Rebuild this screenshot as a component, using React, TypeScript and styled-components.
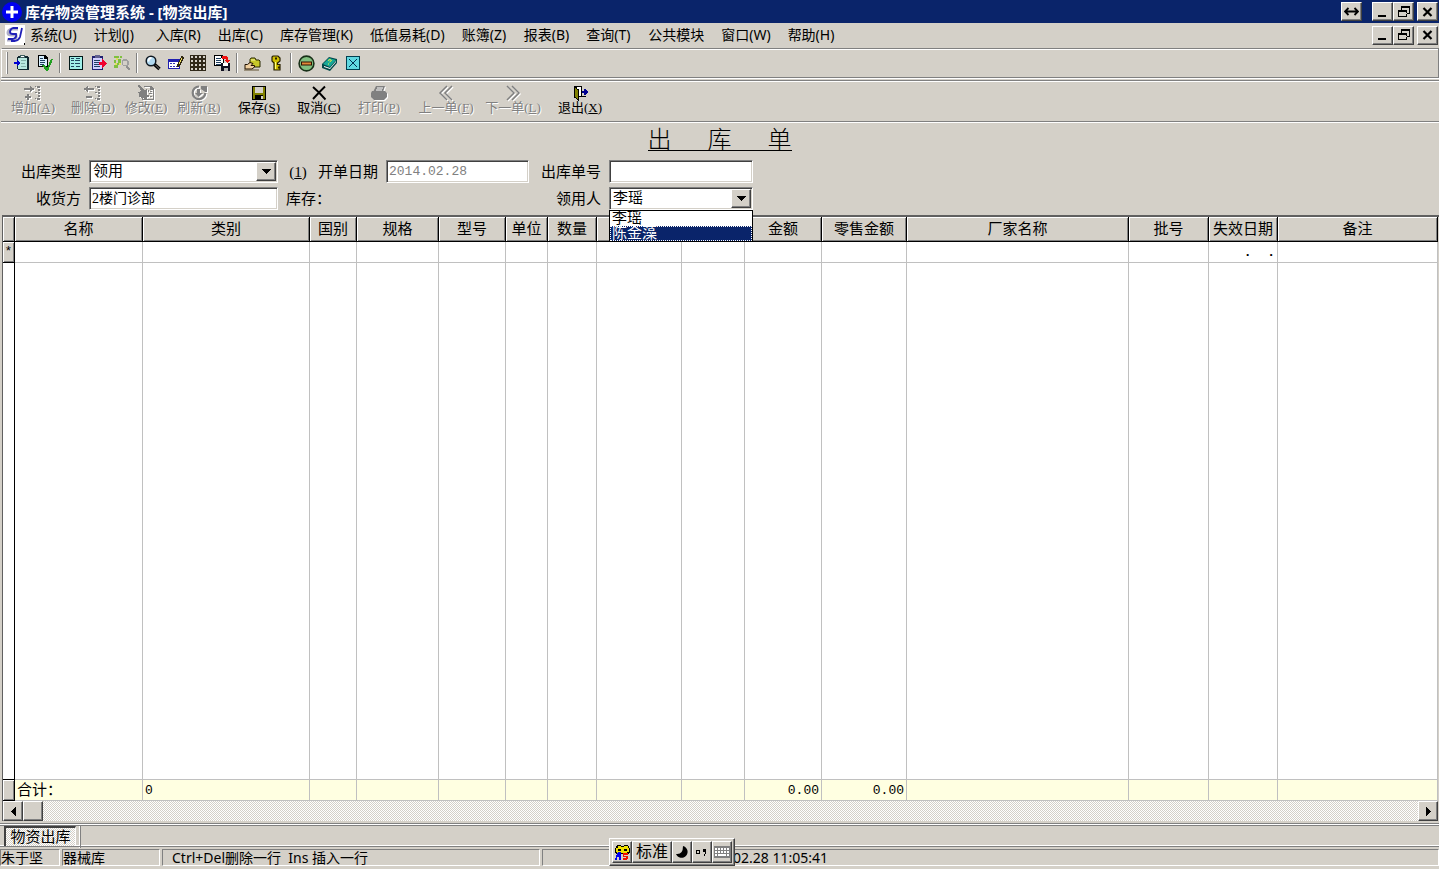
import React from 'react';
import styled, { createGlobalStyle, css } from 'styled-components';

const face = '#d4d0c8';
const shade = '#808080';
const ink = '#000000';
const navy = '#0a246a';
const uiFont = `"Noto Sans", "Noto Sans CJK SC", sans-serif`;
const songFont = `"Liberation Serif", "Noto Sans CJK SC", serif`;
const monoFont = `"Liberation Mono", "Noto Sans CJK SC", monospace`;
const dither = `repeating-conic-gradient(#ffffff 0% 25%, ${face} 0% 50%) 0 0 / 2px 2px`;

const GlobalStyle = createGlobalStyle`
  * { box-sizing: border-box; }
  body { margin: 0; background: ${face}; color: ${ink}; font: 14px/20px ${uiFont}; }
  button, input, select { font: inherit; color: inherit; margin: 0; padding: 0; border-radius: 0; }
`;

const raised = css`
  border: 1px solid;
  border-color: #ffffff #404040 #404040 #ffffff;
  box-shadow: inset -1px -1px 0 ${shade};
  background: ${face};
`;

const sunken = css`
  border: 1px solid;
  border-color: ${shade} #ffffff #ffffff ${shade};
  box-shadow: inset 1px 1px 0 #404040, inset -1px -1px 0 ${face};
  background: #ffffff;
`;

const Page = styled.div`
  display: flex;
  flex-direction: column;
  min-height: 100vh;
  overflow: hidden;
`;

const TitleBar = styled.header`
  display: flex;
  align-items: center;
  height: 23px;
  padding: 0 1px 0 2px;
  gap: 3px;
  background: ${navy};
  color: #ffffff;
`;

const Caption = styled.span`
  flex: 1;
  font-size: 15px;
  font-weight: 700;
  white-space: nowrap;
`;

const FrameButtons = styled.div`
  display: flex;
`;

const FrameButton = styled.button<{ $gap?: number }>`
  ${raised}
  display: grid;
  place-items: center;
  width: 21px;
  height: 19px;
  margin-left: ${(p) => p.$gap ?? 0}px;
  color: ${ink};
`;

const MenuBar = styled.nav`
  display: flex;
  align-items: center;
  height: 25px;
  padding: 0 1px 1px 5px;
`;

const MenuList = styled.div`
  display: flex;
  flex: 1;
  gap: 17px;
  margin-left: 5px;
`;

const MenuItem = styled.button`
  min-width: 45px;
  border: 0;
  background: none;
  text-align: left;
  white-space: nowrap;
`;

const IconBar = styled.div`
  display: flex;
  align-items: center;
  height: 30px;
  margin-left: 1px;
  padding-left: 4px;
  border: 1px solid ${shade};
  border-left-color: #ffffff;
  box-shadow: inset 0 1px 0 #ffffff, 0 1px 0 #ffffff;
`;

const Grip = styled.span`
  width: 2px;
  height: 22px;
  margin-right: 2px;
  border-left: 1px solid #ffffff;
  border-right: 1px solid ${shade};
`;

const Divider = styled.span`
  width: 2px;
  height: 20px;
  margin: 0 3px;
  border-left: 1px solid ${shade};
  border-right: 1px solid #ffffff;
`;

const IconButton = styled.button`
  display: grid;
  place-items: center;
  width: 23px;
  height: 24px;
  border: 0;
  background: none;
`;

const ActionBar = styled.div`
  display: flex;
  height: 42px;
  margin: 2px 0 0 1px;
  padding: 4px 0 0 2px;
  border-top: 1px solid ${shade};
  border-bottom: 1px solid ${shade};
  box-shadow: inset 0 1px 0 #ffffff, 0 1px 0 #ffffff;
`;

const ActionButton = styled.button<{ $width: number }>`
  display: flex;
  flex-direction: column;
  align-items: center;
  width: ${(p) => p.$width}px;
  border: 0;
  background: none;
  font: 13px/14px ${songFont};
  white-space: nowrap;

  &:disabled {
    color: ${shade};
    text-shadow: 1px 1px 0 #ffffff;
  }

  &:disabled svg {
    filter: drop-shadow(1px 1px 0 #ffffff);
  }
`;

const FormArea = styled.form`
  padding: 2px 0 4px;
  font: 15px/20px ${songFont};
`;

const FormTitle = styled.h1`
  width: fit-content;
  height: 27px;
  margin: 0 auto 9px;
  border-bottom: 1px solid ${ink};
  font: 300 24px/32px ${songFont};
  white-space: pre;
`;

const Fields = styled.div`
  display: grid;
  grid-template-columns: 81px 189px 92px 143px 64px 144px;
  grid-auto-rows: 24px;
  gap: 3px 8px;
`;

const FieldLabel = styled.label<{ $left?: boolean }>`
  align-self: center;
  text-align: ${(p) => (p.$left ? 'left' : 'right')};
  white-space: pre;
`;

const TextField = styled.input`
  ${sunken}
  width: 100%;
  height: 23px;
  padding: 0 2px 3px;
  font: 14px/18px ${songFont};

  &:disabled {
    padding: 0 2px;
    color: ${shade};
    font: 13px/18px ${monoFont};
  }
`;

const Combo = styled.div`
  position: relative;
`;

const ComboSelect = styled.select`
  ${sunken}
  appearance: none;
  width: 100%;
  height: 23px;
  padding: 0 22px 0 3px;
  font: 15px/19px ${songFont};
`;

const ComboArrow = styled.span`
  ${raised}
  position: absolute;
  top: 2px;
  right: 2px;
  display: grid;
  place-items: center;
  width: 20px;
  height: 19px;
  pointer-events: none;
`;

const ComboList = styled.ul`
  position: absolute;
  z-index: 2;
  top: 23px;
  left: 0;
  right: 0;
  margin: 0;
  padding: 0;
  border: 1px solid ${ink};
  background: #ffffff;
  list-style: none;
`;

const ComboOption = styled.li<{ $active?: boolean }>`
  height: 15px;
  padding-left: 2px;
  font: 15px/15px ${songFont};
  ${(p) =>
    p.$active &&
    css`
      background: ${navy};
      color: #ffffff;
      outline: 1px dotted #ffffff;
      outline-offset: -1px;
    `}
`;

const GridFrame = styled.main`
  flex: 1;
  display: grid;
  grid-template-rows: 1fr 20px;
  margin-left: 2px;
  padding-right: 1px;
  border-top: 2px solid #606060;
  border-left: 1px solid #606060;
`;

const DataTable = styled.table`
  width: 100%;
  table-layout: fixed;
  border-collapse: separate;
  border-spacing: 0;
  background: #ffffff;
  font: 15px/18px ${songFont};
`;

const HeadCell = styled.th`
  height: 25px;
  padding: 0;
  border-right: 1px solid ${ink};
  border-bottom: 1px solid ${ink};
  background: ${face};
  box-shadow: inset 1px 1px 0 #ffffff, inset -1px -1px 0 ${shade};
  font-weight: 400;
  white-space: nowrap;
`;

const MarkCell = styled.th<{ $plain?: boolean }>`
  padding: 0;
  border-right: 1px solid ${ink};
  border-bottom: 1px solid ${ink};
  background: ${(p) => (p.$plain ? '#ffffff' : face)};
  box-shadow: ${(p) => (p.$plain ? 'none' : `inset 1px 1px 0 #ffffff, inset -1px -1px 0 ${shade}`)};
  font: 13px/18px ${monoFont};
`;

const Cell = styled.td<{ $total?: boolean; $right?: boolean }>`
  padding: 0 2px;
  border-right: 1px solid #c0c0c0;
  border-bottom: 1px solid #c0c0c0;
  background: ${(p) => (p.$total ? '#ffffe1' : '#ffffff')};
  text-align: ${(p) => (p.$right ? 'right' : 'left')};
  white-space: pre;
`;

const Row = styled.tr<{ $fixed?: boolean }>`
  height: ${(p) => (p.$fixed ? '20px' : 'auto')};
`;

const Figure = styled.span<{ $strong?: boolean }>`
  font: ${(p) => (p.$strong ? 700 : 400)} 13px/18px ${monoFont};
`;

const ScrollBar = styled.div`
  display: flex;
  background: ${dither};
`;

const ScrollButton = styled.button`
  ${raised}
  display: grid;
  place-items: center;
  width: 20px;
  height: 20px;
`;

const ScrollSpace = styled.span`
  flex: 1;
`;

const TabBar = styled.div`
  display: flex;
  gap: 3px;
  height: 23px;
  margin-top: 2px;
  padding: 2px 0 0 4px;
  border-top: 1px solid ${shade};
  border-bottom: 1px solid #ffffff;
  box-shadow: inset 0 1px 0 #ffffff, inset 0 2px 0 ${shade};
`;

const WindowTab = styled.button`
  width: 72px;
  height: 20px;
  border: solid;
  border-width: 2px 1px 0 2px;
  border-color: #404040 #ffffff #ffffff #404040;
  background: ${dither};
  font: 15px/18px ${songFont};
  white-space: nowrap;
`;

const StatusBar = styled.footer`
  display: grid;
  grid-template-columns: 60px 98px 378px 1fr;
  gap: 2px;
  padding: 2px 0 3px;
  border-top: 1px solid ${shade};
`;

const StatusPanel = styled.div<{ $indent?: number }>`
  height: 17px;
  padding-left: ${(p) => p.$indent ?? 0}px;
  border: 1px solid;
  border-color: ${shade} #ffffff #ffffff ${shade};
  line-height: 16px;
  white-space: pre;
`;

const ImeBar = styled.div`
  ${raised}
  position: fixed;
  z-index: 3;
  left: 609px;
  bottom: 3px;
  display: flex;
  height: 28px;
  padding: 2px;
`;

const ImeButton = styled.button<{ $width: number }>`
  ${raised}
  display: grid;
  place-items: center;
  width: ${(p) => p.$width}px;
  height: 22px;
  font: 16px/18px ${songFont};
`;

const Mnemonic = ({ letter }: { letter: string }) => (
  <span>(<u>{letter}</u>)</span>
);

type IconProps = { children: React.ReactNode; w?: number; h?: number };
const Pixels = ({ children, w = 16, h = 16 }: IconProps) => (
  <svg width={w} height={h} viewBox={`0 0 ${w} ${h}`} shapeRendering="crispEdges" fill="none" aria-hidden="true">
    {children}
  </svg>
);

const Down = () => (
  <Pixels w={9} h={5}><path d="M0 0h9v1h-1v1h-1v1h-1v1h-1v1h-1v-1h-1v-1h-1v-1h-1v-1h-1z" fill="#000" /></Pixels>
);
const Minimize = () => <Pixels w={13} h={12}><path d="M2 9h8v2h-8z" fill="#000" /></Pixels>;
const Restore = () => (
  <Pixels w={13} h={12}>
    <path d="M4 0h9v8h-4v-1h3v-5h-7v2h-1zM1 4h9v7h-9zM2 6v4h7v-4z" fill="#000" fillRule="evenodd" />
  </Pixels>
);
const Close = () => (
  <svg width="11" height="10" viewBox="0 0 11 10" aria-hidden="true"><path d="M1.500 1l8 8M9.500 1l-8 8" stroke="#000" strokeWidth="2.200" /></svg>
);
const Spread = () => (
  <svg width="15" height="9" viewBox="0 0 15 9" fill="none" aria-hidden="true">
    <path d="M1 4.500h13M4.500 1L1 4.500 4.500 8M10.500 1L14 4.500 10.500 8" stroke="#000" strokeWidth="1.800" />
  </svg>
);

const AppMark = () => (
  <svg width="20" height="20" viewBox="0 0 20 20" aria-hidden="true">
    <circle cx="10" cy="10" r="10" fill="#0000f0" />
    <path d="M8.500 4h3v4.500H16v3h-4.500V16h-3v-4.500H4v-3h4.500z" fill="#fff" />
  </svg>
);

const DocMark = () => (
  <svg width="20" height="20" viewBox="0 0 20 20" aria-hidden="true">
    <path d="M0 0h20v20H0z" fill="#fff" />
    <path d="M13 4H7Q3 5 3 8q0 2 4 2h4q1 4-3 5H2" fill="none" stroke="#b0b0c8" strokeWidth="3" />
    <path d="M13 3H8Q5 4 5 7q0 2 3 2h3q1 4-3 5H3M17 3l-2 9q-1 3-5 4H6" fill="none" stroke="#2020b8" strokeWidth="1.800" />
    <path d="M19 18h1v2h-1z" fill="#000" />
  </svg>
);

const Lines = ({ x, y, w = 6, n = 3 }: { x: number; y: number; w?: number; n?: number }) => (
  <>{Array.from({ length: n }, (_, i) => <path key={i} d={`M${x} ${y + i * 2}h${w}v1h-${w}z`} fill="#204060" />)}</>
);

const clipboardIn = (
  <Pixels>
    <path d="M4 1h10v1h1v13H4v-1H3V2h1z" fill="#102830" /><path d="M4 3h9v11H4z" fill="#b8e8e0" />
    <path d="M6 0h5v3H6z" fill="#406060" /><path d="M7 1h3v1H7z" fill="#fff" />
    <path d="M7 5h5v1H7zM7 8h4v1H7zM7 11h5v1H7z" fill="#80b0a8" />
    <path d="M0 7h3V5h1v1h1v1h1v2H5v1H4v1H3V9H0z" fill="#0000d0" />
  </Pixels>
);
const pageCheck = (
  <Pixels>
    <path d="M1 0h7l3 3v9H1z" fill="#000" /><path d="M2 1h5v3h3v7H2z" fill="#d8f0ff" />
    <path d="M3 3h3v1H3zM3 5h5v1H3zM3 7h5v1H3zM3 9h4v1H3z" fill="#204060" />
    <path d="M5 10h2l3 3 4-9h2l-5 12H9z" fill="#20a020" />
  </Pixels>
);
const listing = (
  <Pixels>
    <path d="M1 1h14v14H1z" fill="#001818" /><path d="M2 2h12v12H2z" fill="#a0f0e8" />
    <path d="M3 3h3v1H3zM8 3h4v1H8zM3 5h3v1H3zM7 5h5v1H7zM3 8h3v1H3zM7 8h5v1H7zM3 11h3v1H3zM8 11h4v1H8z" fill="#204860" />
  </Pixels>
);
const clipboardOut = (
  <Pixels>
    <path d="M1 1h11v14H1z" fill="#202070" /><path d="M2 3h9v11H2z" fill="#d0d0ff" />
    <path d="M4 0h5v3H4z" fill="#606090" /><Lines x={3} y={5} w={6} n={4} />
    <path d="M8 7h3V4h1v1h1v1h1v1h1v1h1v1h-1v1h-1v1h-1v1h-1v1h-1v-3H8z" fill="#f00030" />
  </Pixels>
);
const findFaded = (
  <Pixels>
    <path d="M0 1h5v2H0zM0 5h2v3H0zM4 4h3v4H4zM0 10h4v3H0zM6 1h2v2H6zM3 8h2v2H3z" fill="#80c040" />
    <path d="M2 3h2v2H2zM1 8h2v2H1zM5 8h2v2H5z" fill="#e0e060" />
    <path d="M9 4h4v1h1v1h1v4h-1v1H9v-1H8V5h1zM9 6v4h4V6z" fill="#a0a0a0" fillRule="evenodd" />
    <path d="M12 11h2v1h1v1h1v2h-2v-1h-1v-1h-1z" fill="#909090" />
  </Pixels>
);
const magnifier = (
  <svg width="16" height="16" viewBox="0 0 16 16" aria-hidden="true">
    <path d="M9 9l5.500 5" stroke="#000" strokeWidth="3.500" /><path d="M10.500 10l4 4" stroke="#808080" strokeWidth="1" />
    <circle cx="6" cy="6" r="4.800" fill="#b0d8f0" stroke="#101820" strokeWidth="1.500" />
    <path d="M3.500 6.500q0-3.500 3-3.500" stroke="#fff" strokeWidth="1.800" fill="none" />
  </svg>
);
const editTable = (
  <Pixels>
    <path d="M0 4h12v10H0z" fill="#2020b0" /><path d="M1 7h10v6H1z" fill="#fff" />
    <path d="M2 8h2v1H2zM5 8h2v1H5zM2 11h2v1H2zM5 11h2v1H5zM8 11h2v1H8z" fill="#3030b0" />
    <path d="M13 1h2v1h1v2h-1v2h-1v2h-1v2h-1v1h-1v1H9V9h1V7h1V5h1V3h1z" fill="#302810" />
    <path d="M13 3h1v2h-1v2h-1v2h-1V7h1V5h1z" fill="#f0e060" />
  </Pixels>
);
const gridDots = (
  <Pixels w={17} h={17}>
    {[0, 4, 8, 12].flatMap((y) => [0, 4, 8, 12].map((x) => (
      <path key={`${x}-${y}`} d={`M${x} ${y}h4v4h-4zM${x + 1} ${y + 1}v2h2v-2z`} fill="#302818" fillRule="evenodd" />
    )))}
  </Pixels>
);
const exportDisk = (
  <Pixels>
    <path d="M0 0h8l2 2v9H0z" fill="#000" /><path d="M1 1h6v2h2v7H1z" fill="#fff" /><Lines x={2} y={3} w={5} n={4} />
    <path d="M8 1h5v1h1v3h2l-3 3-3-3h2V4H8z" fill="#f01010" />
    <path d="M7 8h9v8H7z" fill="#101020" /><path d="M9 8h5v3H9z" fill="#fff" /><path d="M10 13h4v3h-4z" fill="#b0b0b0" />
  </Pixels>
);
const handBox = (
  <svg width="17" height="16" viewBox="0 0 17 16" aria-hidden="true">
    <path d="M6 6V4.500L7 3h4l1 2h3l1 1v6H8L6 9z" fill="#c8c828" stroke="#282800" strokeWidth="1" />
    <path d="M7 5h4" stroke="#f8f8a0" />
    <path d="M1 9.500h2.500L6 7.500l3 1-2 2h3.500v1.500L8 14H1z" fill="#f0d0a0" stroke="#201000" />
    <path d="M0 15h15" stroke="#605030" />
  </svg>
);
const keyIcon = (
  <svg width="16" height="16" viewBox="0 0 16 16" aria-hidden="true">
    <path d="M5 1h5l2 2v3L9.500 8v1.500H12V12h-1.500v1H12v2H6V8L4 6V2z" fill="#d0c000" stroke="#282000" strokeWidth="1.200" />
    <path d="M7 2.500h2v2H7z" fill="#282000" /><path d="M7.500 7v7" stroke="#ffff80" />
  </svg>
);
const stopSign = (
  <svg width="17" height="17" viewBox="0 0 17 17" aria-hidden="true">
    <circle cx="8.500" cy="8.500" r="7.400" fill="#80c080" stroke="#183018" strokeWidth="1.600" />
    <path d="M3 6.500h11v4H3z" fill="#301000" /><path d="M4 7.500h9v2H4z" fill="#e08838" />
  </svg>
);
const helpBook = (
  <svg width="17" height="17" viewBox="0 0 17 17" aria-hidden="true">
    <path d="M1 9l7-7 8 2v4l-7 8-8-3z" fill="#004848" /><path d="M2 9l6-6 7 2-6 7z" fill="#18a898" />
    <path d="M3 12l6 2 6-7v-1l-6 7-6-2z" fill="#fff" />
    <path d="M7 5.500l2-1 1.500 1-2 1.500M7.500 8.500v1" stroke="#f0f040" fill="none" />
  </svg>
);
const closeBox = (
  <Pixels>
    <path d="M1 1h14v14H1z" fill="#004050" /><path d="M2 2h12v12H2z" fill="#60d8e0" />
    <path d="M4 4h1v1h1v1h1v1h2V6h1V5h1V4h1v1h-1v1h-1v1H9v2h1v1h1v1h1v1h-1v-1h-1v-1H9V9H7v1H6v1H5v1H4v-1h1v-1h1V9h1V7H6V6H5V5H4z" fill="#003050" />
  </Pixels>
);

const rowDots = 'M13 1h3v2h-3zM11 1h1v1h-1zM14 4h2v2h-2zM14 7h2v2h-2zM11 7h2v1h-2zM14 10h2v2h-2zM13 13h3v2h-3zM11 13h1v1h-1z';
const insertRow = (
  <Pixels w={18}>
    <path d={`M0 3h6V1h1v1h1v1h2v2H8v1H7v1H6V5H0zM3 9h2v2h2v2H5v2H3v-2H1v-2h2z${rowDots}`} fill="#808080" />
  </Pixels>
);
const deleteRow = (
  <Pixels w={18}>
    <path d={`M10 3H4V1H3v1H2v1H0v2h2v1h1v1h1V5h6zM2 11h6v2H2z${rowDots}`} fill="#808080" />
  </Pixels>
);
const modify = (
  <Pixels>
    <path d="M6 1h7l3 3v11H4v-2h1v1h10V5h-3V2H6z" fill="#808080" />
    <path d="M0 0h2v1h1v1h1v1h1v1h1v1h2V4h1v6h2v2H9v2H6v-1H3v-1H1V8H0V7h2V6h1V5H2V3H1V2H0zM10 5h1v2h-1zM12 6h2v1h-2zM11 8h3v1h-3zM12 11h2v1h-2z" fill="#808080" />
  </Pixels>
);
const refresh = (
  <svg width="16" height="16" viewBox="0 0 16 16" fill="none" aria-hidden="true">
    <path d="M8 1.500A6.300 6.300 0 1 0 14.300 8" stroke="#808080" strokeWidth="2.200" />
    <path d="M10 1h6v6h-2L10 4zM6 4h3v4h3l-4.500 4L4 8h2z" fill="#808080" />
  </svg>
);
const save = (
  <Pixels>
    <path d="M1 1h14v14H1z" fill="#000" /><path d="M2 2h2v6h8V2h2v12H2z" fill="#808000" />
    <path d="M4 2h8v6H4z" fill="#d4d0c8" /><path d="M4 10h8v5H4z" fill="#000" /><path d="M10 11h2v3h-2z" fill="#d4d0c8" />
  </Pixels>
);
const cancel = (
  <svg width="16" height="16" viewBox="0 0 16 16" aria-hidden="true">
    <path d="M2 2l6 5.500 6.500 7M14 1.500L8 7.500l-6 6.500" fill="none" stroke="#000" strokeWidth="1.900" />
  </svg>
);
const printer = (
  <svg width="16" height="16" viewBox="0 0 16 16" aria-hidden="true">
    <path d="M5 1h9l-2 6H2zM1 6h13l2 2v4l-3 3H3l-3-3V8z" fill="#808080" /><path d="M6 3h6M5 5h6" stroke="#fff" />
  </svg>
);
const previous = (
  <svg width="16" height="16" viewBox="0 0 16 16" fill="none" aria-hidden="true">
    <path d="M9 1L2 8l7 7M14 1L7 8l7 7" stroke="#808080" strokeWidth="1.500" />
  </svg>
);
const next = (
  <svg width="16" height="16" viewBox="0 0 16 16" fill="none" aria-hidden="true">
    <path d="M2 1l7 7-7 7M7 1l7 7-7 7" stroke="#808080" strokeWidth="1.500" />
  </svg>
);
const exit = (
  <Pixels>
    <path d="M2 1h8v11H2z" fill="#000" /><path d="M5 2h4v9H5z" fill="#fff" />
    <path d="M2 1h1v1h1v1h1v1h2v12H6v-1H5v-1H4v-1H2z" fill="#000" />
    <path d="M3 3h1v1h1v1h1v9H5v-1H4v-1H3z" fill="#808000" /><path d="M10 11h4v1h-4z" fill="#000" />
    <path d="M10 6h2V4h2v1h1v1h1v2h-1v1h-1v1h-2V8h-2z" fill="#000090" />
  </Pixels>
);

const menus = ['系统(U)', '计划(J)', '入库(R)', '出库(C)', '库存管理(K)', '低值易耗(D)', '账簿(Z)', '报表(B)', '查询(T)', '公共模块', '窗口(W)', '帮助(H)'];

const iconGroups: [string, React.ReactNode][][] = [
  [['入库', clipboardIn], ['审核', pageCheck]],
  [['清单', listing], ['出库', clipboardOut], ['查找', findFaded]],
  [['查询', magnifier], ['编辑', editTable], ['表格', gridDots], ['导出', exportDisk]],
  [['领用', handBox], ['密码', keyIcon]],
  [['停止', stopSign], ['帮助', helpBook], ['关闭', closeBox]],
];

const actions: { name: string; mark: string; width: number; icon: React.ReactNode; on?: boolean }[] = [
  { name: '增加', mark: 'A', width: 60, icon: insertRow },
  { name: '删除', mark: 'D', width: 60, icon: deleteRow },
  { name: '修改', mark: 'E', width: 46, icon: modify },
  { name: '刷新', mark: 'R', width: 60, icon: refresh },
  { name: '保存', mark: 'S', width: 60, icon: save, on: true },
  { name: '取消', mark: 'C', width: 60, icon: cancel, on: true },
  { name: '打印', mark: 'P', width: 60, icon: printer },
  { name: '上一单', mark: 'F', width: 74, icon: previous },
  { name: '下一单', mark: 'L', width: 60, icon: next },
  { name: '退出', mark: 'X', width: 74, icon: exit, on: true },
];

const columns: { name: string; width?: number; entry?: string; total?: string; right?: boolean }[] = [
  { name: '名称', width: 128, total: '合计：' },
  { name: '类别', width: 167, total: '0' },
  { name: '国别', width: 47 },
  { name: '规格', width: 82 },
  { name: '型号', width: 67 },
  { name: '单位', width: 42 },
  { name: '数量', width: 49 },
  { name: '', width: 85 },
  { name: '', width: 63 },
  { name: '金额', width: 77, total: '0.00', right: true },
  { name: '零售金额', width: 85, total: '0.00', right: true },
  { name: '厂家名称', width: 222 },
  { name: '批号', width: 80 },
  { name: '失效日期', width: 69, entry: '.  .', right: true },
  { name: '备注' },
];

const WindowControls = ({ spread }: { spread?: boolean }) => (
  <FrameButtons>
    {spread && <FrameButton aria-label="切换"><Spread /></FrameButton>}
    <FrameButton $gap={10} aria-label="最小化"><Minimize /></FrameButton>
    <FrameButton aria-label="还原"><Restore /></FrameButton>
    <FrameButton $gap={3} aria-label="关闭"><Close /></FrameButton>
  </FrameButtons>
);

export default function App() {
  return (
    <Page>
      <GlobalStyle />
      <TitleBar>
        <AppMark />
        <Caption>库存物资管理系统 - [物资出库]</Caption>
        <WindowControls spread />
      </TitleBar>
      <MenuBar>
        <DocMark />
        <MenuList>{menus.map((m) => <MenuItem key={m}>{m}</MenuItem>)}</MenuList>
        <WindowControls />
      </MenuBar>

      <IconBar role="toolbar">
        <Grip />
        {iconGroups.map((group, i) => (
          <React.Fragment key={i}>
            {i > 0 && <Divider />}
            {group.map(([label, icon]) => <IconButton key={label} aria-label={label}>{icon}</IconButton>)}
          </React.Fragment>
        ))}
      </IconBar>
      <ActionBar role="toolbar">
        {actions.map((a) => (
          <ActionButton key={a.name} $width={a.width} disabled={!a.on}>
            {a.icon}
            <span>{a.name}<Mnemonic letter={a.mark} /></span>
          </ActionButton>
        ))}
      </ActionBar>

      <FormArea onSubmit={(e) => e.preventDefault()}>
        <FormTitle>{'出\u3000  库\u3000  单'}</FormTitle>
        <Fields>
          <FieldLabel htmlFor="kind">出库类型</FieldLabel>
          <Combo>
            <ComboSelect id="kind" defaultValue="领用"><option>领用</option></ComboSelect>
            <ComboArrow><Down /></ComboArrow>
          </Combo>
          <FieldLabel htmlFor="date">(<u>1</u>){'   '}开单日期</FieldLabel>
          <TextField id="date" defaultValue="2014.02.28" disabled />
          <FieldLabel htmlFor="number">出库单号</FieldLabel>
          <TextField id="number" />

          <FieldLabel htmlFor="receiver">收货方</FieldLabel>
          <TextField id="receiver" defaultValue="2楼门诊部" />
          <FieldLabel as="span" $left>库存：</FieldLabel>
          <span />
          <FieldLabel htmlFor="person">领用人</FieldLabel>
          <Combo>
            <ComboSelect id="person" defaultValue="李瑶"><option>李瑶</option><option>陈金藻</option></ComboSelect>
            <ComboArrow><Down /></ComboArrow>
            <ComboList role="listbox" aria-label="领用人">
              <ComboOption role="option">李瑶</ComboOption>
              <ComboOption role="option" aria-selected $active>陈金藻</ComboOption>
            </ComboList>
          </Combo>
        </Fields>
      </FormArea>

      <GridFrame>
        <DataTable>
          <colgroup>
            <col width={12} />
            {columns.map((c, i) => <col key={i} width={c.width} />)}
          </colgroup>
          <thead>
            <tr>
              <HeadCell />
              {columns.map((c, i) => <HeadCell key={i} scope="col">{c.name}</HeadCell>)}
            </tr>
          </thead>
          <tbody>
            <Row $fixed>
              <MarkCell>*</MarkCell>
              {columns.map((c, i) => <Cell key={i} $right={c.right}>{c.entry && <Figure $strong>{c.entry}</Figure>}</Cell>)}
            </Row>
            <Row>
              <MarkCell $plain />
              {columns.map((_, i) => <Cell key={i} />)}
            </Row>
          </tbody>
          <tfoot>
            <Row $fixed>
              <MarkCell />
              {columns.map((c, i) => (
                <Cell key={i} $total $right={c.right}>
                  {i === 0 ? c.total : c.total && <Figure>{c.total}</Figure>}
                </Cell>
              ))}
            </Row>
          </tfoot>
        </DataTable>
        <ScrollBar>
          <ScrollButton aria-label="向左滚动"><Pixels w={5} h={9}><path d="M5 0v9h-1v-1h-1v-1h-1v-1h-1v-1h-1v-1h1v-1h1v-1h1v-1h1v-1z" fill="#000" /></Pixels></ScrollButton>
          <ScrollButton aria-label="滑块" />
          <ScrollSpace />
          <ScrollButton aria-label="向右滚动"><Pixels w={5} h={9}><path d="M0 0v9h1v-1h1v-1h1v-1h1v-1h1v-1h-1v-1h-1v-1h-1v-1h-1v-1z" fill="#000" /></Pixels></ScrollButton>
        </ScrollBar>
      </GridFrame>

      <TabBar>
        <WindowTab>物资出库</WindowTab>
        <Grip />
      </TabBar>
      <StatusBar>
        <StatusPanel>朱于坚</StatusPanel>
        <StatusPanel>器械库</StatusPanel>
        <StatusPanel $indent={9}>{'Ctrl+Del删除一行  Ins 插入一行'}</StatusPanel>
        <StatusPanel $indent={190}>02.28 11:05:41</StatusPanel>
      </StatusBar>

      <ImeBar>
        <ImeButton $width={20} aria-label="输入法">
          <Pixels w={17} h={17}>
            <path d="M3 1h4v1h3V1h4v1h1v2h1v5h-1v1H2V9H1V4h1V2h1z" fill="#000" />
            <path d="M4 2h3v1h3V2h4v2h1v4h-2v1H3V8H2V4h2z" fill="#f0e000" />
            <path d="M4 5h3v2H4zM10 5h3v2h-3z" fill="#000" />
            <path d="M4 8h3v8H5v-3H3v3H1v-2h1v-3h1v-2h1z" fill="#0000f0" />
            <path d="M9 9h5v2h-4v1h4v3h-1v1H9v-2h3v-1H9z" fill="#f01000" />
          </Pixels>
        </ImeButton>
        <ImeButton $width={40}>标准</ImeButton>
        <ImeButton $width={20} aria-label="半角">
          <svg width="12" height="12" viewBox="0 0 12 12" aria-hidden="true"><path d="M7 0a6 6 0 1 1-7 8q7 1 7-8z" fill="#000" /></svg>
        </ImeButton>
        <ImeButton $width={20} aria-label="标点">
          <Pixels w={12} h={8}><path d="M0 2h4v4H0zM1 3v2h2V3zM7 1h3v5H9v2H8V6h1V4H7z" fill="#000" fillRule="evenodd" /></Pixels>
        </ImeButton>
        <ImeButton $width={20} aria-label="软键盘">
          <Pixels w={16} h={12}>
            <path d="M0 0h16v12H0z" fill="#808080" />
            {[2, 5].map((y) => [1, 4, 7, 10, 13].map((x) => <path key={`${x}-${y}`} d={`M${x} ${y}h2v2h-2z`} fill="#fff" />))}
            <path d="M1 8h2v2H1zM4 8h8v2H4zM13 8h2v2h-2z" fill="#fff" />
          </Pixels>
        </ImeButton>
      </ImeBar>
    </Page>
  );
}
